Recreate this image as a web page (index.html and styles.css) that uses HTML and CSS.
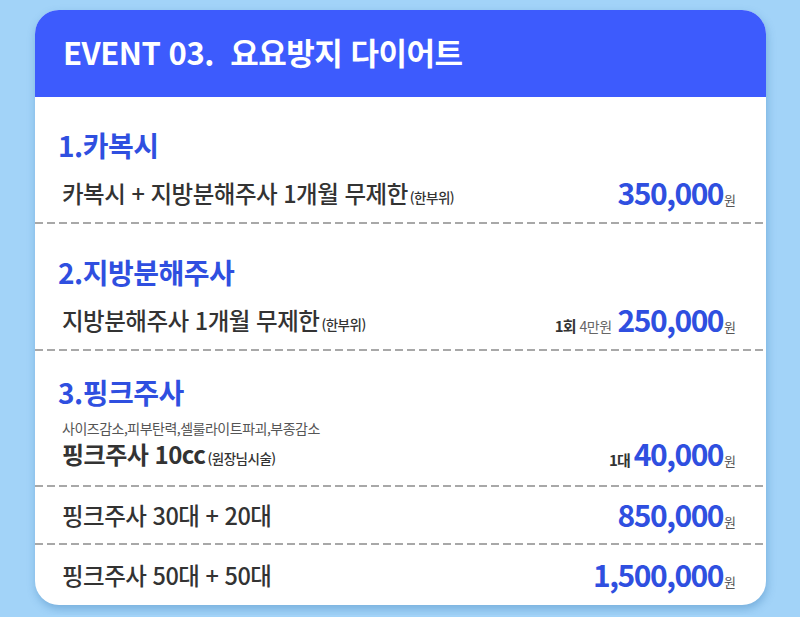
FILE: index.html
```html
<!DOCTYPE html>
<html lang="ko">
<head>
    <meta charset="UTF-8">
    <meta name="viewport" content="width=device-width, initial-scale=1.0">
    <title>EVENT 03</title>
    <link rel="stylesheet" href="styles.css">
</head>
<body>
    <div class="card">
        <header class="card-head">
            <h1>EVENT 03.&nbsp; 요요방지 다이어트</h1>
        </header>

        <section class="group">
            <h2>1.카복시</h2>
            <div class="row">
                <div class="name">카복시 + 지방분해주사 1개월 무제한<small>(한부위)</small></div>
                <div class="price"><span class="num">350,000</span><span class="won">원</span></div>
            </div>
        </section>

        <section class="group">
            <h2>2.지방분해주사</h2>
            <div class="row">
                <div class="name">지방분해주사 1개월 무제한<small>(한부위)</small></div>
                <div class="price"><span class="unit">1회</span><span class="per">4만원</span><span class="num">250,000</span><span class="won">원</span></div>
            </div>
        </section>

        <section class="group pink">
            <h2>3.핑크주사</h2>
            <div class="row">
                <div class="name">
                    <p class="desc">사이즈감소,피부탄력,셀룰라이트파괴,부종감소</p>
                    <span class="big">핑크주사 10cc</span><small>(원장님시술)</small>
                </div>
                <div class="price"><span class="unit">1대</span><span class="num">40,000</span><span class="won">원</span></div>
            </div>
        </section>

        <div class="row single">
            <div class="name">핑크주사 30대 + 20대</div>
            <div class="price"><span class="num">850,000</span><span class="won">원</span></div>
        </div>

        <div class="row single last">
            <div class="name">핑크주사 50대 + 50대</div>
            <div class="price"><span class="num">1,500,000</span><span class="won">원</span></div>
        </div>
    </div>
</body>
</html>
```

FILE: styles.css
```css
body {
    margin: 0;
    padding: 10px 0;
    background-color: #a2d3f8;
    font-family: "Noto Sans CJK KR", "Noto Sans", sans-serif;
    color: #333;
}
.card {
    width: 731px;
    margin-left: 35px;
    background-color: #fff;
    border-radius: 24px;
    overflow: hidden;
    box-shadow: 1px 4px 8px rgba(40, 110, 170, 0.35);
}
.card-head {
    height: 87px;
    background-color: #3d5bfd;
    display: flex;
    align-items: center;
    padding-left: 28px;
}
.card-head h1 {
    margin: -4px 0 0 0;
    color: #fff;
    font-size: 31px;
    font-weight: 700;
    letter-spacing: -0.5px;
}
/* dashed separator under each block */
.group,
.single {
    background: linear-gradient(to right, #a8a8a8 66%, transparent 0) left bottom / 12px 2px repeat-x;
}
.group {
    padding-top: 28px;
}
.group.pink {
    padding-top: 21px;
}
.group h2 {
    margin: 0 0 12px 23px;
    color: #2f4fe0;
    font-size: 28px;
    font-weight: 700;
    line-height: 40px;
    letter-spacing: -0.5px;
}
.group.pink h2 {
    margin-bottom: 8px;
}
.row {
    display: flex;
    justify-content: space-between;
    align-items: flex-end;
    padding: 0 30px 15px 27px;
}
.pink .row {
    padding-bottom: 17px;
}
.name {
    font-size: 23.5px;
    font-weight: 500;
    line-height: 32px;
    letter-spacing: -0.5px;
}
.name small {
    font-size: 13.5px;
    font-weight: 500;
    line-height: 1;
    margin-left: 2px;
    letter-spacing: -0.5px;
}
.desc {
    margin: 0 0 2px 0;
    font-size: 14px;
    font-weight: 400;
    line-height: 16px;
    color: #555;
    letter-spacing: -0.5px;
}
.big {
    font-size: 24px;
    font-weight: 700;
    line-height: 1;
}
.price {
    display: flex;
    align-items: baseline;
    height: 32px;
    font-size: 23.5px;
    line-height: 32px;
}
.price span {
    line-height: 1;
}
.num {
    color: #2f4fe0;
    font-size: 30px;
    font-weight: 700;
    letter-spacing: -1.5px;
}
.won {
    font-size: 13px;
    color: #555;
    margin-left: 1px;
}
.unit {
    font-size: 15px;
    font-weight: 700;
    margin-right: 4px;
    letter-spacing: -1px;
}
.per {
    font-size: 14px;
    color: #666;
    margin-right: 6px;
    letter-spacing: -0.5px;
}
.single {
    height: 58px;
    box-sizing: border-box;
    padding-top: 0;
    padding-bottom: 2px;
    align-items: center;
}
.single.last {
    height: 60px;
    background: none;
    padding-bottom: 0;
}
```
